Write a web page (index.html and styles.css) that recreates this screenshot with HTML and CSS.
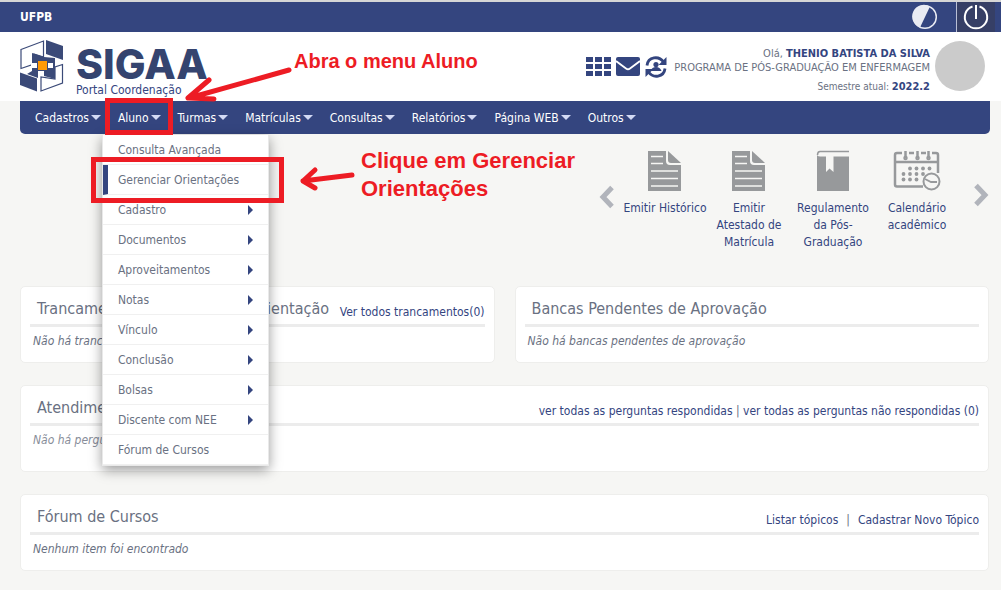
FILE: index.html
```html
<!DOCTYPE html>
<html lang="pt-BR">
<head>
<meta charset="utf-8">
<title>SIGAA - Portal Coordenação</title>
<link rel="stylesheet" href="styles.css">
</head>
<body>
<div class="topbar">
  <strong class="inst">UFPB</strong>
  <div class="top-actions">
    <button class="icon-btn contrast" aria-label="Alto contraste"><svg width="26" height="26" viewBox="0 0 26 26"><circle cx="13" cy="13" r="11.3" fill="#34457f" stroke="#e9ebf3" stroke-width="1.5"/><path d="M18 2.500A11.700 11.700 0 1 0 8 23.500z" fill="#e9ebf3"/></svg></button>
    <button class="icon-btn power" aria-label="Sair"><svg width="28" height="28" viewBox="0 0 28 28" fill="none" stroke="#fff" stroke-width="2"><path d="M10.500 3.500A11.200 11.200 0 1 0 17.500 3.500M14 2V16"/></svg></button>
  </div>
</div>
<header class="header">
  <a class="brand" href="#" aria-label="SIGAA Portal Coordenação">
    <svg class="mark" width="44" height="52" viewBox="0 0 44 52">
      <path d="M1 9.500L23.500 1V17L14 14V24L1 28.500z" fill="#fff" stroke="#3b4a78" stroke-width="1.200"/>
      <path d="M42.500 24.500V43L21 51V37L35 39V27z" fill="#fff" stroke="#3b4a78" stroke-width="1.200"/>
      <g fill="#3b4a78"><path d="M26 0L43 6V20L26 14z"/><path d="M0 32.500L17 38.500V51.500L0 45z"/><path d="M12 25V13L24 17L35 18V39L24 36V31H18V38L7 34L12 31z"/></g>
      <path d="M11 23H17V28H11zM28 23H33V28H28z" fill="#fff"/><path d="M18 21H27V30H18z" fill="#ff9a05"/>
    </svg>
    <span class="brand-text"><span class="brand-name">SIGAA</span><span class="brand-sub">Portal Coordenação</span></span>
  </a>
  <div class="user">
    <div class="tools">
      <button class="icon-btn" aria-label="Módulos"><svg width="25" height="20" viewBox="0 0 25 20" fill="#34457f"><path d="M0 0h7v5H0zM9 0h7v5H9zM18 0h7v5h-7zM0 7h7v5H0zM9 7h7v5H9zM18 7h7v5h-7zM0 14h7v5H0zM9 14h7v5H9zM18 14h7v5h-7z"/></svg></button>
      <button class="icon-btn" aria-label="Mensagens"><svg width="24" height="20" viewBox="0 0 24 20"><rect width="24" height="19" rx="2" fill="#34457f"/><path d="M0 4L10 11.500Q12 13 14 11.500L24 4" fill="none" stroke="#fff" stroke-width="1.800"/></svg></button>
      <button class="icon-btn" aria-label="Alterar vínculo"><svg width="22" height="22" viewBox="0 0 22 22"><g fill="none" stroke="#34457f" stroke-width="2.800"><path d="M2 9.500C3 .5 14 -.5 18.500 6M20 12.500C19 21.500 8 22.500 3.500 16"/></g><path d="M21.500 1V9H13.500zM.5 21V13H8.500z" fill="#34457f"/><circle cx="11" cy="8.500" r="2.600" fill="#34457f"/><path d="M5.500 15Q7 11 11 11T16.500 15z" fill="#34457f"/></svg></button>
    </div>
    <div class="who">
      <span class="hello">Olá, <strong>THENIO BATISTA DA SILVA</strong></span>
      <span class="program">PROGRAMA DE PÓS-GRADUAÇÃO EM ENFERMAGEM</span>
      <span class="term">Semestre atual: <strong>2022.2</strong></span>
    </div>
    <div class="avatar"></div>
  </div>
</header>
<nav class="nav">
  <button>Cadastros</button>
  <div class="nav-item">
    <button>Aluno</button>
    <ul class="menu">
      <li><a href="#">Consulta Avançada</a></li>
      <li class="current"><a href="#">Gerenciar Orientações</a></li>
      <li class="sub"><a href="#">Cadastro</a></li>
      <li class="sub"><a href="#">Documentos</a></li>
      <li class="sub"><a href="#">Aproveitamentos</a></li>
      <li class="sub"><a href="#">Notas</a></li>
      <li class="sub"><a href="#">Vínculo</a></li>
      <li class="sub"><a href="#">Conclusão</a></li>
      <li class="sub"><a href="#">Bolsas</a></li>
      <li class="sub"><a href="#">Discente com NEE</a></li>
      <li><a href="#">Fórum de Cursos</a></li>
    </ul>
  </div>
  <button>Turmas</button>
  <button>Matrículas</button>
  <button>Consultas</button>
  <button>Relatórios</button>
  <button>Página WEB</button>
  <button>Outros</button>
</nav>
<main class="main">
  <section class="shortcuts">
    <button class="icon-btn prev" aria-label="Anterior"><svg width="16" height="24" viewBox="0 0 16 24" fill="none" stroke="#b1b4bb" stroke-width="5"><path d="M13 2.500L4 12L13 21.500"/></svg></button>
    <div class="tiles">
      <a href="#"><svg width="48" height="42" viewBox="0 0 48 42"><path d="M7 1H25V11Q25 15 29 15H40V41H7z" fill="#97999b"/><path d="M27 1L40 13H30Q27 13 27 10z" fill="#97999b"/><path d="M10 6.500H22M10 13.500H22M10 21H37M10 28.500H37M10 36H37" stroke="#f6f6f4" stroke-width="1.500"/></svg><span>Emitir Histórico</span></a>
      <a href="#"><svg width="48" height="42" viewBox="0 0 48 42"><path d="M7 1H25V11Q25 15 29 15H40V41H7z" fill="#97999b"/><path d="M27 1L40 13H30Q27 13 27 10z" fill="#97999b"/><path d="M10 6.500H22M10 13.500H22M10 21H37M10 28.500H37M10 36H37" stroke="#f6f6f4" stroke-width="1.500"/></svg><span>Emitir<br>Atestado de Matrícula</span></a>
      <a href="#"><svg width="48" height="42" viewBox="0 0 48 42"><path d="M8 4Q8 6.500 11 6.500H17V22L20.500 18.500L24.500 22V6.500H40V41H8z" fill="#97999b"/><path d="M40 1.500H11Q8.500 1.500 8.500 5" fill="none" stroke="#97999b" stroke-width="1.500"/></svg><span>Regulamento da Pós-Graduação</span></a>
      <a href="#"><svg width="48" height="42" viewBox="0 0 48 42"><g fill="none" stroke="#97999b" stroke-width="2.500"><path d="M30 36.500H4Q2 36.500 2 34.500V5Q2 3 4 3H9M16 3H21M28 3H33M39 3H43Q45 3 45 5V23M2 12H45"/><path d="M12.500 1V8M24.500 1V8M35.500 1V8"/><circle cx="12.500" cy="8" r="1"/><circle cx="24.500" cy="8" r="1"/><circle cx="35.500" cy="8" r="1"/><circle cx="38.500" cy="31.500" r="8" stroke-width="2"/><path d="M32 29L38 32L44 32" stroke-width="1.800"/></g><g fill="#97999b"><circle cx="17" cy="18.500" r="1.900"/><circle cx="23.500" cy="18.500" r="1.900"/><circle cx="30" cy="18.500" r="1.900"/><circle cx="36.500" cy="18.500" r="1.900"/><circle cx="10.500" cy="24" r="1.900"/><circle cx="17" cy="24" r="1.900"/><circle cx="23.500" cy="24" r="1.900"/><circle cx="30" cy="24" r="1.900"/><circle cx="10.500" cy="29.500" r="1.900"/><circle cx="17" cy="29.500" r="1.900"/><circle cx="23.500" cy="29.500" r="1.900"/></g></svg><span>Calendário acadêmico</span></a>
    </div>
    <button class="icon-btn next" aria-label="Próximo"><svg width="16" height="24" viewBox="0 0 16 24" fill="none" stroke="#b1b4bb" stroke-width="5"><path d="M3 2.500L12 12L3 21.500"/></svg></button>
  </section>
  <div class="cards">
    <section class="card">
      <div class="card-head"><h2>Trancamentos Pendentes em Orientação</h2><span class="links"><a href="#">Ver todos trancamentos(0)</a></span></div>
      <p>Não há trancamentos</p>
    </section>
    <section class="card">
      <div class="card-head"><h2>Bancas Pendentes de Aprovação</h2></div>
      <p>Não há bancas pendentes de aprovação</p>
    </section>
    <section class="card wide tall">
      <div class="card-head"><h2>Atendimento ao Aluno</h2><span class="links"><a href="#">ver todas as perguntas respondidas</a> | <a href="#">ver todas as perguntas não respondidas (0)</a></span></div>
      <p class="faint">Não há perguntas</p>
    </section>
    <section class="card wide">
      <div class="card-head"><h2>Fórum de Cursos</h2><span class="links gap"><a href="#">Listar tópicos</a><span>|</span><a href="#">Cadastrar Novo Tópico</a></span></div>
      <p>Nenhum item foi encontrado</p>
    </section>
  </div>
</main>
<div class="notes">
  <svg width="600" height="220" viewBox="0 0 600 220" fill="none" stroke="#ed1c24">
    <path d="M107.500 100.500H170.500V132.500H107.500zM93.500 159.500H281.500V200.500H93.500z" stroke-width="5"/>
    <g stroke-width="5" stroke-linecap="round" stroke-linejoin="round"><path d="M289 70L189 98M209 80L188 98L214 99"/><path d="M352 175L303 181M315 170L303 181L315 188"/></g>
  </svg>
  <p class="note first">Abra o menu Aluno</p>
  <p class="note second">Clique em Gerenciar Orientações</p>
</div>
</body>
</html>
```
FILE: styles.css
```css
* { box-sizing: border-box; }
body { margin: 0; background: #f6f6f4; color: #6a7182; font: 12px/16px "DejaVu Sans Condensed", "DejaVu Sans", sans-serif; position: relative; }
a { color: #34457f; text-decoration: none; }
button { font: inherit; border: 0; background: none; padding: 0; cursor: pointer; }
.icon-btn { display: flex; align-items: center; justify-content: center; }
.topbar { height: 32px; border-top: 2px solid #d6d6d6; background: #34457f; display: flex; justify-content: space-between; align-items: center; padding: 0 6px 0 20px; }
.inst { color: #fff; }
.top-actions { display: flex; align-self: stretch; gap: 18px; }
.power { width: 39px; background: #363f66; border-left: 1px solid #b9bfd6; }
.header { background: #fff; height: 69px; display: flex; justify-content: space-between; padding: 0 16px 0 20px; }
.brand { display: flex; gap: 12px; padding-top: 8px; }
.brand-text { display: flex; flex-direction: column; padding-top: 5px; }
.brand-name { font: 800 41px/38px Inter, sans-serif; color: #35446f; }
.brand-sub { line-height: 14px; }
.user { display: flex; gap: 5px; }
.tools { display: flex; gap: 5px; align-items: center; padding-right: 2px; }
.who { text-align: right; font-size: 11px; line-height: 14px; display: flex; flex-direction: column; padding-top: 15px; }
.who strong { color: #34457f; }
.term { font-size: 10px; margin-top: 5px; }
.term strong { font-size: 11px; }
.avatar { width: 50px; height: 50px; border-radius: 50%; background: #cbcbcb; margin-top: 9px; }
.nav { margin: 0 11px 0 20px; height: 33px; background: #34457f; border-radius: 0 0 5px 5px; display: flex; gap: 17px; padding: 0 15px; }
.nav-item { position: relative; display: flex; }
.nav button { color: #fff; display: flex; align-items: center; gap: 2px; }
.nav button::after { content: ""; border: 5px solid transparent; border-top-color: #d3daf5; border-bottom: 0; }
.menu { position: absolute; top: 34px; left: -16px; width: 167px; margin: 0; padding: 0; list-style: none; background: #fff; border: 1px solid #e9e9e9; border-top: 0; box-shadow: 0 4px 12px rgba(0,0,0,.4); z-index: 2; }
.menu li { height: 30px; border-bottom: 1px solid #f0f0f0; display: flex; align-items: center; justify-content: space-between; padding: 0 15px; }
.menu a { color: #6a7182; }
.menu .current { border-left: 5px solid #34457f; padding-left: 10px; }
.sub::after { content: ""; border: 5px solid transparent; border-left-color: #34457f; border-right: 0; }
.main { padding: 16px 12px 20px 20px; }
.shortcuts { display: flex; justify-content: flex-end; min-height: 136px; }
.tiles { display: flex; margin: 0 14px 0 8px; }
.tiles a { width: 84px; text-align: center; line-height: 17px; display: flex; flex-direction: column; align-items: center; gap: 8px; }
.prev, .next { height: 24px; margin-top: 35px; }
.next { margin-top: 33px; }
.cards { display: grid; grid-template-columns: 1fr 1fr; gap: 22px 20px; }
.card { background: #fff; border: 1px solid #eeeeec; border-radius: 5px; padding: 10px 9px 12px; min-height: 77px; min-width: 0; }
.wide { grid-column: 1 / -1; }
.tall { min-height: 87px; }
.card-head { display: flex; justify-content: space-between; align-items: flex-end; border-bottom: 3px solid #ececec; padding-left: 7px; height: 30px; }
h2 { margin: 0; font-size: 16px; line-height: 24px; font-weight: normal; align-self: flex-start; white-space: nowrap; }
.links { white-space: nowrap; line-height: 20px; padding-bottom: 2px; }
.gap { display: flex; gap: 8px; }
.card p { margin: 6px 3px 0; font-style: italic; }
.faint { color: #888d99; }
.notes { position: absolute; top: 0; left: 0; z-index: 3; pointer-events: none; }
.notes svg { display: block; }
.note { position: absolute; margin: 0; color: #ed1c24; font: bold 20px/28px "Liberation Sans", sans-serif; }
.first { left: 294px; top: 47px; white-space: nowrap; }
.second { left: 361px; top: 147px; width: 230px; font-size: 22px; }
```
